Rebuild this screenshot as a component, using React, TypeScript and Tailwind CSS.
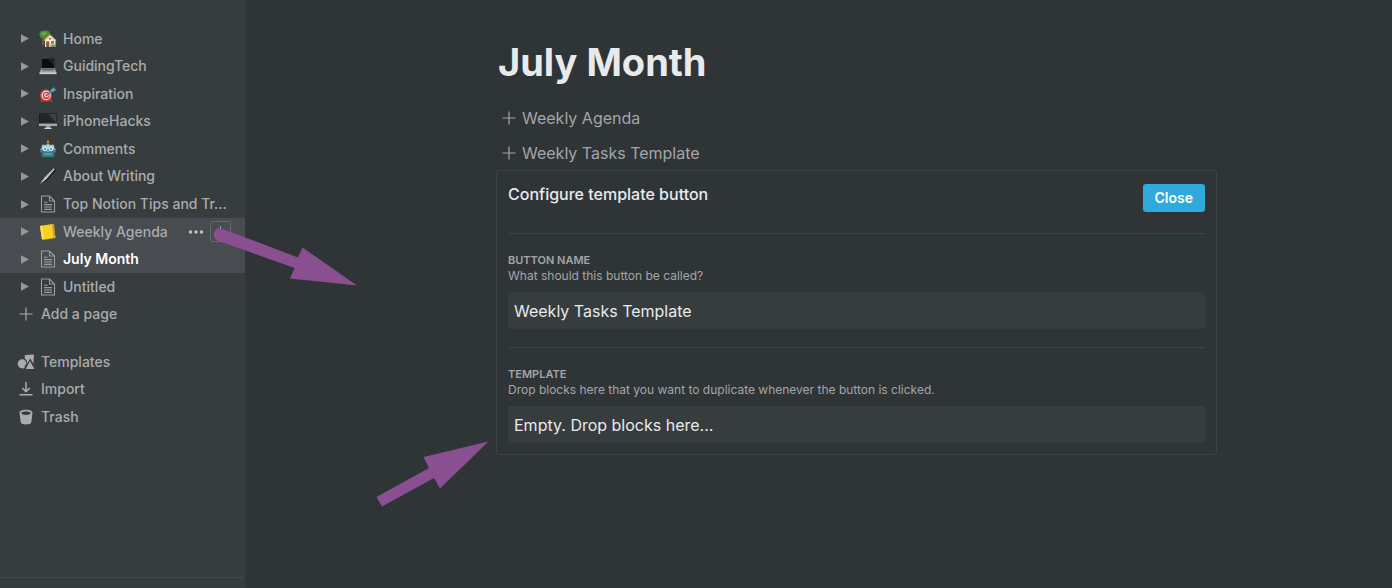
import type { ReactNode } from "react";

type Page = { id: string; title: string; icon: ReactNode; state?: "hover" | "active" };

function DocIcon() {
  return (
    <svg width="16" height="18" viewBox="0 0 16 18" fill="none" stroke="#9a9ea0" strokeWidth="1.1">
      <path d="M1.5 1h8l5 5v11h-13z" />
      <path d="M9.5 1v5h5M4 7.2h3.5M4 9.6h8M4 12h8M4 14.4h8" />
    </svg>
  );
}

function HouseIcon() {
  return (
    <svg width="18" height="18" viewBox="0 0 18 18">
      <path d="M3 7h2v8H3z" fill="#76563a" />
      <path d="M.5 5C0 2.500 2.500 .3 5.500 .6 8.500 0 11.500 1.800 11 4L8 8.500H3C1.500 8 .6 6.500 .5 5z" fill="#4f8a37" />
      <path d="M2 4c1-2 4-2.500 6-1L5 6z" fill="#73a84d" />
      <path d="M6 9.500l5-4.500 5.500 5V17H6z" fill="#f0e8d2" />
      <path d="M4.800 10L11 4.200l6.400 6-.9.8L11 6.200 5.700 10.900z" fill="#d9b98c" />
      <path d="M7.200 11.500h3V17h-3z" fill="#88513c" />
      <path d="M12 11h3v2.800h-3z" fill="#6b8890" />
      <path d="M10 8h2v1.600h-2z" fill="#8a6948" />
      <path d="M11.500 14.500h5.500V17h-5.500z" fill="#71a044" />
    </svg>
  );
}

function LaptopIcon() {
  return (
    <svg width="18" height="18" viewBox="0 0 18 18">
      <path d="M2.500 1h13q.5 0 .5.500V12H2V1.500q0-.5.500-.5z" fill="#4d5255" />
      <path d="M2.600 1.600h12.800V11H2.600z" fill="#0b0d0e" />
      <path d="M8 1.600h7.400v8z" fill="#1d2123" />
      <path d="M2 11.500h14l1.500 4.500H.5z" fill="#9a9ea0" />
      <path d="M3 12h12l.4 1.200H2.600z" fill="#5a5f62" />
      <path d="M.5 15.200h17V17.200H.5z" fill="#c2c5c7" />
    </svg>
  );
}

function TargetIcon() {
  return (
    <svg width="18" height="18" viewBox="0 0 18 18">
      <path d="M2.500 13L1 17h2l2-2zM10 15l2 2h1.500L12 13z" fill="#a93532" />
      <ellipse cx="7" cy="10.500" rx="6" ry="6.300" fill="#cf3d3c" />
      <ellipse cx="7.200" cy="10.400" rx="4.600" ry="4.800" fill="#e9dedb" />
      <ellipse cx="7.300" cy="10.400" rx="3.400" ry="3.600" fill="#cf3d3c" />
      <ellipse cx="7.400" cy="10.300" rx="2.200" ry="2.300" fill="#e9dedb" />
      <circle cx="7.500" cy="10.200" r="1" fill="#cf3d3c" />
      <path d="M7.500 10.200L14 4.800" stroke="#3c88a8" strokeWidth="1.300" />
      <path d="M11.500 5L15 2l.4 1.800 2.100.5L14 7l-2.500.2z" fill="#4ba3c6" />
    </svg>
  );
}

function DesktopIcon() {
  return (
    <svg width="20" height="18" viewBox="0 0 20 18">
      <path d="M1 1.500h18V14H1z" fill="#101214" />
      <path d="M1.500 2h17v9.500h-17z" fill="#232628" />
      <path d="M10 2h8.500v9z" fill="#3c4042" />
      <path d="M1 11.500h18V14H1z" fill="#a5a9ab" />
      <path d="M8 14h4l.7 2.500H7.300z" fill="#a0a4a6" />
      <path d="M6.500 15.800h7V17h-7z" fill="#d5d7d8" />
    </svg>
  );
}

function RobotIcon() {
  return (
    <svg width="18" height="18" viewBox="0 0 18 18">
      <path d="M8.500 2h1v3h-1z" fill="#a3a4a0" />
      <circle cx="9" cy="1.800" r="1.200" fill="#d7893c" />
      <path d="M1 8.500h2v4H1zM15 8.500h2v4h-2z" fill="#3f7683" />
      <path d="M3 5.500q1.500-2 3 0 3-2.500 6 0 1.500-2 3 0l1 5H2z" fill="#a3ced4" />
      <path d="M2.500 9.500h13V15q0 2-2 2h-9q-2 0-2-2z" fill="#367c8d" />
      <circle cx="6" cy="9" r="2.200" fill="#dceced" />
      <circle cx="12" cy="9" r="2.200" fill="#dceced" />
      <circle cx="6" cy="9" r="1.100" fill="#4d8590" />
      <circle cx="12" cy="9" r="1.100" fill="#4d8590" />
      <path d="M9 10l1 1.800H8z" fill="#c9dadb" />
      <path d="M5 13.200h8v1.600H5z" fill="#5fa0ad" />
    </svg>
  );
}

function PenIcon() {
  return (
    <svg width="18" height="18" viewBox="0 0 18 18">
      <path d="M2 16.500L6 11 15.500 1.800 17 3 9 12.500z" fill="#15191b" />
      <path d="M1 17L5.500 10.500 14.500 1.500l1.200.8L7.500 12z" fill="#d9dcdd" />
      <path d="M4.500 13L14 3" stroke="#8e9395" strokeWidth=".7" />
    </svg>
  );
}

function LedgerIcon() {
  return (
    <svg width="18" height="18" viewBox="0 0 18 18">
      <path d="M3 2.500L15 1l1.500 14L5 17z" fill="#c79725" />
      <path d="M1 3L13 1.200 14.500 15 3 16.500z" fill="#f4d21f" />
      <path d="M13 1.200l2 .5 1.500 13-2 .5z" fill="#dba923" />
      <path d="M1 3l2-.3L5 16.200l-2 .3z" fill="#f9e05b" />
      <path d="M14.200 3.500h1.400M14.400 5.500h1.400M14.600 7.500h1.400M14.800 9.500h1.400M15 11.500h1.400" stroke="#72602c" strokeWidth=".6" />
    </svg>
  );
}

function PlusIcon({ size = 14 }: { size?: number }) {
  return (
    <svg width={size} height={size} viewBox="0 0 14 14" fill="none" stroke="currentColor" strokeWidth="1.200">
      <path d="M7 .5v13M.5 7h13" />
    </svg>
  );
}

function TemplatesIcon() {
  return (
    <svg width="18" height="16" viewBox="0 0 18 16" fill="currentColor">
      <path d="M8 1l9-.5-.6 9.300-3.200-5.300-3.800 6.500A5 5 0 0 0 7.600 4.600z" />
      <path d="M6.300 5.300A4.600 4.600 0 1 0 8 13.500l-.6-.5 2-3.800a4.600 4.600 0 0 0-3.100-3.900z" />
      <path d="M13 7l4.300 8H8.700z" />
    </svg>
  );
}

function ImportIcon() {
  return (
    <svg width="14" height="14" viewBox="0 0 14 14" fill="none" stroke="currentColor" strokeWidth="1.500">
      <path d="M7 0v9.500M3.300 6L7 9.600 10.700 6M.5 12.800h13" />
    </svg>
  );
}

function TrashIcon() {
  return (
    <svg width="14" height="16" viewBox="0 0 14 16">
      <path d="M.5 3.800C.5 2 3 .8 7 .8s6.500 1.200 6.500 3l-1.100 9.200c-.2 1.700-2.400 2.500-5.400 2.500s-5.200-.8-5.400-2.500z" fill="currentColor" />
      <path d="M2.200 4C2.600 2.900 4.500 2.400 7 2.400s4.400.5 4.800 1.600C11.400 5.300 9.500 5.900 7 5.900S2.600 5.300 2.200 4z" fill="#373c3f" />
    </svg>
  );
}

const PAGES: Page[] = [
  { id: "home", title: "Home", icon: <HouseIcon /> },
  { id: "gt", title: "GuidingTech", icon: <LaptopIcon /> },
  { id: "inspiration", title: "Inspiration", icon: <TargetIcon /> },
  { id: "ih", title: "iPhoneHacks", icon: <DesktopIcon /> },
  { id: "comments", title: "Comments", icon: <RobotIcon /> },
  { id: "writing", title: "About Writing", icon: <PenIcon /> },
  { id: "tips", title: "Top Notion Tips and Tr...", icon: <DocIcon /> },
  { id: "agenda", title: "Weekly Agenda", icon: <LedgerIcon />, state: "hover" },
  { id: "july", title: "July Month", icon: <DocIcon />, state: "active" },
  { id: "untitled", title: "Untitled", icon: <DocIcon /> },
];

const TOOLS = [
  { label: "Templates", icon: <TemplatesIcon /> },
  { label: "Import", icon: <ImportIcon /> },
  { label: "Trash", icon: <TrashIcon /> },
];

function PageRow({ page }: { page: Page }) {
  return (
    <li className={`flex min-w-0 items-center pl-5 pr-3.5 ${page.state ? "bg-[#484b4f]" : ""}`}>
      <button type="button" aria-label={`Expand ${page.title}`} className="flex w-[17px] shrink-0 text-[#96999b]">
        <svg width="9" height="9" viewBox="0 0 9 9" fill="currentColor">
          <path d="M1 .2l8 4.300-8 4.300z" />
        </svg>
      </button>
      <a href="#" className="flex min-w-0 flex-1 items-center">
        <span className="flex w-[21px] shrink-0 justify-center">{page.icon}</span>
        <span className={`ml-[5px] truncate ${page.state === "active" ? "font-semibold text-white" : ""}`}>{page.title}</span>
      </a>
      {page.state === "hover" && (
        <span className="flex items-center gap-1.5 text-[#c3c5c6]">
          <button type="button" aria-label="More" className="flex">
            <svg width="16" height="4" viewBox="0 0 16 4" fill="currentColor">
              <circle cx="2.500" cy="2" r="1.700" />
              <circle cx="8" cy="2" r="1.700" />
              <circle cx="13.500" cy="2" r="1.700" />
            </svg>
          </button>
          <button type="button" aria-label="Add a page inside" className="flex size-[21px] items-center justify-center rounded-[3px] border border-[#686b6e]">
            <PlusIcon size={11} />
          </button>
        </span>
      )}
    </li>
  );
}

function Sidebar() {
  return (
    <aside className="flex w-[245px] shrink-0 flex-col bg-[#373c3f] pt-[25px] text-sm font-medium text-[#a9acad]">
      <ul className="grid h-[303px] auto-rows-fr grid-cols-1">
        {PAGES.map((page) => (
          <PageRow key={page.id} page={page} />
        ))}
        <li className="flex items-center">
          <button type="button" className="flex items-center pl-4">
            <span className="flex w-[20px] justify-center">
              <PlusIcon />
            </span>
            <span className="ml-[5px]">Add a page</span>
          </button>
        </li>
      </ul>
      <ul className="mt-5 grid h-[83px] auto-rows-fr grid-cols-1">
        {TOOLS.map((tool) => (
          <li key={tool.label} className="flex items-center">
            <a href="#" className="flex items-center pl-4">
              <span className="flex w-[20px] justify-center">{tool.icon}</span>
              <span className="ml-[5px]">{tool.label}</span>
            </a>
          </li>
        ))}
      </ul>
      <div className="mt-auto h-[11px] border-t border-[#45494c]" />
    </aside>
  );
}

function TemplateButton({ label }: { label: string }) {
  return (
    <button type="button" className="flex h-[35px] items-center gap-1.5 pl-1.5 text-base text-[#a3a6a8]">
      <PlusIcon />
      {label}
    </button>
  );
}

function ConfigPanel() {
  return (
    <section className="rounded-[3px] border border-[#3d4245] px-[11px] pb-[11px]">
      <header className="flex h-[63px] items-start justify-between border-b border-[#3d4245] pt-[13px]">
        <h2 className="text-base leading-5 font-medium text-[#e9eaeb]">Configure template button</h2>
        <button type="button" className="h-7 rounded-[3px] bg-[#2eaadc] px-3 text-sm font-semibold text-white">
          Close
        </button>
      </header>

      <div className="border-b border-[#3d4245] pt-[18px] pb-[18px]">
        <label htmlFor="button-name" className="block text-[11px] leading-4 font-semibold text-[#a3a6a8]">BUTTON NAME</label>
        <p className="text-xs text-[#a3a6a8]">What should this button be called?</p>
        <input
          id="button-name"
          type="text"
          defaultValue="Weekly Tasks Template"
          className="mt-2 block h-[37px] w-full rounded-[2px] bg-[#373c3f] px-1.5 text-base text-[#e9eaeb] outline-none"
        />
      </div>

      <div className="pt-[18px]">
        <h3 className="text-[11px] leading-4 font-semibold text-[#a3a6a8]">TEMPLATE</h3>
        <p className="text-xs text-[#a3a6a8]">Drop blocks here that you want to duplicate whenever the button is clicked.</p>
        <div className="mt-2 flex h-[37px] items-center rounded-[2px] bg-[#373c3f] px-1.5 text-base text-[#e9eaeb]">
          Empty. Drop blocks here...
        </div>
      </div>
    </section>
  );
}

export default function App() {
  return (
    <div className="relative flex min-h-screen bg-[#2f3437] font-['Inter',sans-serif]">
      <Sidebar />
      <main className="min-w-0 flex-1 pt-[38px] pr-[175px] pl-[251px]">
        <h1 className="pl-0.5 text-[38px] leading-[48px] font-bold text-[#e9eaeb]">July Month</h1>
        <div className="mt-[14px] flex flex-col items-start">
          <TemplateButton label="Weekly Agenda" />
          <TemplateButton label="Weekly Tasks Template" />
        </div>
        <ConfigPanel />
      </main>

      {/* Pointers drawn over the page */}
      <svg className="pointer-events-none absolute top-0 left-0" width="500" height="520" viewBox="0 0 500 520" fill="#8a4f91">
        <path d="M220 228L298 257.500 302.500 247.500 357 285.500 290 278.500 294.500 268 216 240Q212 236 214.500 231Q216.500 227.500 220 228z" />
        <path d="M376.500 497L429 468 423.500 457 488.500 441.500 440 488.500 434 478 382 506.500z" />
      </svg>
    </div>
  );
}
